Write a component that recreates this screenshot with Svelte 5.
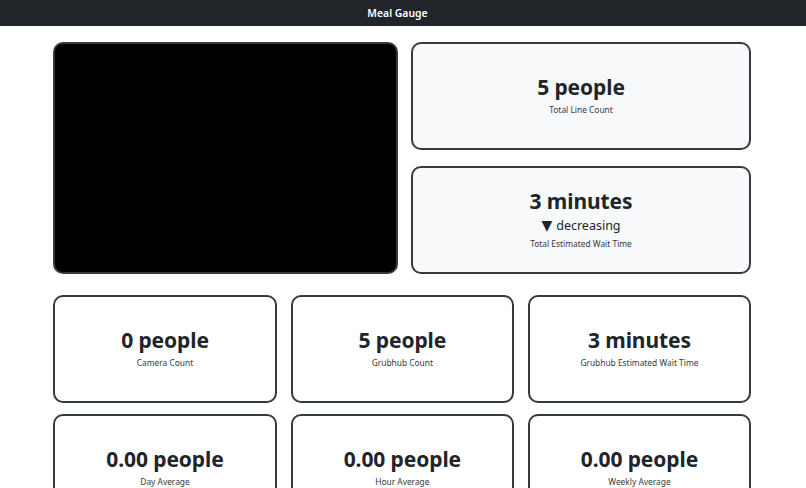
<script>
  const rows = [
    [
      { value: '0 people', label: 'Camera Count' },
      { value: '5 people', label: 'Grubhub Count' },
      { value: '3 minutes', label: 'Grubhub Estimated Wait Time' }
    ],
    [
      { value: '0.00 people', label: 'Day Average' },
      { value: '0.00 people', label: 'Hour Average' },
      { value: '0.00 people', label: 'Weekly Average' }
    ]
  ];
</script>

<div class="page">
  <header class="bar"><span class="brand">Meal Gauge</span></header>
  <main class="content">
    <section class="top">
      <div class="video"></div>
      <div class="side">
        <div class="card tinted">
          <div class="value">5 people</div>
          <div class="label">Total Line Count</div>
        </div>
        <div class="card tinted">
          <div class="value">3 minutes</div>
          <div class="trend"><span class="arrow">▼</span> decreasing</div>
          <div class="label">Total Estimated Wait Time</div>
        </div>
      </div>
    </section>
    {#each rows as row, i}
      <section class="row" class:first={i === 0}>
        {#each row as c}
          <div class="card">
            <div class="value">{c.value}</div>
            <div class="label">{c.label}</div>
          </div>
        {/each}
      </section>
    {/each}
  </main>
</div>

<style>
  :global(html), :global(body) {
    margin: 0;
    overflow: hidden;
    background: #fff;
  }
  .page {
    font-family: "Noto Sans", "Open Sans", sans-serif;
    color: #212529;
    height: 488px;
    overflow: hidden;
  }
  .bar {
    height: 26px;
    background: #212529;
    display: flex;
    align-items: center;
    justify-content: center;
    padding-right: 11px;
    box-sizing: border-box;
  }
  .brand {
    color: #fff;
    font-size: 10.4px;
    font-weight: 600;
  }
  .content {
    margin: 16px 54.5px 0 53px;
  }
  .top {
    display: grid;
    grid-template-columns: 345px 340px;
    gap: 13px;
  }
  .video {
    background: #000;
    border: 2px solid #343a40;
    border-radius: 10px;
    box-sizing: border-box;
    height: 232px;
  }
  .side {
    display: grid;
    grid-template-rows: 108px 108px;
    gap: 16px;
  }
  .card {
    box-sizing: border-box;
    height: 108px;
    padding-bottom: 2px;
    border: 2px solid #343a40;
    border-radius: 10px;
    display: flex;
    flex-direction: column;
    align-items: center;
    justify-content: center;
    background: #fff;
  }
  .tinted {
    background: #f8f9fa;
  }
  .value {
    font-size: 21px;
    font-weight: 700;
    line-height: 27px;
    letter-spacing: -0.1px;
    white-space: nowrap;
  }
  .trend {
    font-size: 12.5px;
    line-height: 20px;
    margin-top: 1px;
    display: flex;
    align-items: center;
    gap: 4px;
  }
  .arrow {
    font-family: "DejaVu Sans", sans-serif;
    font-size: 14px;
    line-height: 18px;
    margin-bottom: 2px;
  }
  .label {
    font-size: 8.4px;
    line-height: 14px;
    margin-top: 2px;
    color: #343a40;
  }
  .trend + .label {
    margin-top: 1px;
  }
  .row {
    display: grid;
    grid-template-columns: 224px 223.5px 223.5px;
    column-gap: 13.6px;
    margin-top: 11px;
  }
  .row.first {
    margin-top: 21px;
  }
</style>
